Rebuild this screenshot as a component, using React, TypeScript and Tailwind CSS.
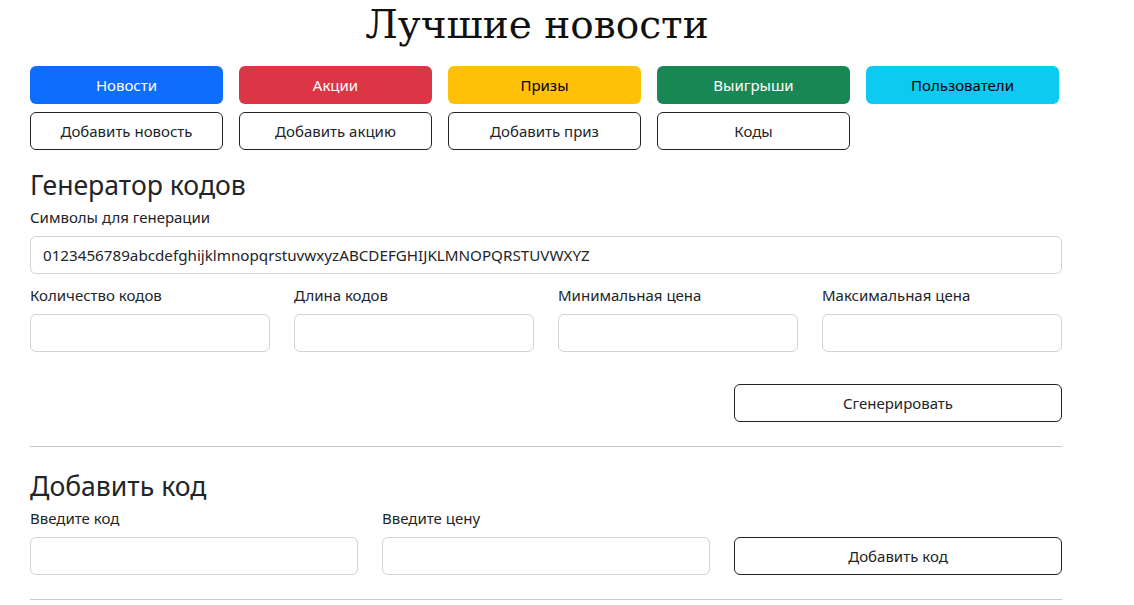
import React from "react";

const font = "font-['Segoe_UI','Noto_Sans',sans-serif]";

function Btn({ children, cls }: { children: React.ReactNode; cls: string }) {
  return (
    <button
      className={`w-[193px] h-[38px] rounded-[6px] text-[15px] leading-[24px] flex items-center justify-center ${cls}`}
    >
      {children}
    </button>
  );
}

function Field({ label, value, w }: { label: string; value?: string; w: string }) {
  return (
    <div className={`${w} flex flex-col`}>
      <label className="text-[15px] leading-[24px] h-[24px] mb-[7px] text-[#212529]">{label}</label>
      <div className="h-[38px] border border-[#ced4da] rounded-[6px] px-[12px] flex items-center text-[15.2px] text-[#212529]">
        {value}
      </div>
    </div>
  );
}

export default function App() {
  return (
    <div className={`${font} bg-white text-[#212529] w-[1134px] h-[605px] overflow-hidden pl-[30px]`}>
      <div className="w-[1032px] flex flex-col">
        <h1 className="font-['DejaVu_Serif',serif] text-[39px] leading-[44px] text-center pr-[18px] pt-[3px] text-[#111]">
          Лучшие новости
        </h1>
        <div className="flex gap-[16px] mt-[19px]">
          <Btn cls="bg-[#0d6efd] text-white">Новости</Btn>
          <Btn cls="bg-[#dc3545] text-white">Акции</Btn>
          <Btn cls="bg-[#ffc107] text-black">Призы</Btn>
          <Btn cls="bg-[#198754] text-white">Выигрыши</Btn>
          <Btn cls="bg-[#0dcaf0] text-black">Пользователи</Btn>
        </div>
        <div className="flex gap-[16px] mt-[8px]">
          <Btn cls="border border-[#212529] text-[#212529]">Добавить новость</Btn>
          <Btn cls="border border-[#212529] text-[#212529]">Добавить акцию</Btn>
          <Btn cls="border border-[#212529] text-[#212529]">Добавить приз</Btn>
          <Btn cls="border border-[#212529] text-[#212529]">Коды</Btn>
        </div>

        <h3 className="text-[26.6px] leading-[32px] mt-[19px] mb-[4px]">Генератор кодов</h3>
        <Field w="w-full" label="Символы для генерации" value="0123456789abcdefghijklmnopqrstuvwxyzABCDEFGHIJKLMNOPQRSTUVWXYZ" />
        <div className="flex gap-[24px] mt-[9px]">
          <Field w="w-[240px]" label="Количество кодов" />
          <Field w="w-[240px]" label="Длина кодов" />
          <Field w="w-[240px]" label="Минимальная цена" />
          <Field w="w-[240px]" label="Максимальная цена" />
        </div>
        <div className="flex justify-end mt-[32px]">
          <button className="w-[328px] h-[38px] rounded-[6px] border border-[#212529] text-[15px] flex items-center justify-center">
            Сгенерировать
          </button>
        </div>
        <div className="h-px bg-[#c8c9ca] mt-[24px]" />

        <h3 className="text-[26.6px] leading-[33px] mt-[23px] mb-[3px]">Добавить код</h3>
        <div className="flex gap-[24px] items-end">
          <Field w="w-[328px]" label="Введите код" />
          <Field w="w-[328px]" label="Введите цену" />
          <button className="w-[328px] h-[38px] rounded-[6px] border border-[#212529] text-[15px] flex items-center justify-center">
            Добавить код
          </button>
        </div>
        <div className="h-px bg-[#c8c9ca] mt-[24px]" />
      </div>
    </div>
  );
}
